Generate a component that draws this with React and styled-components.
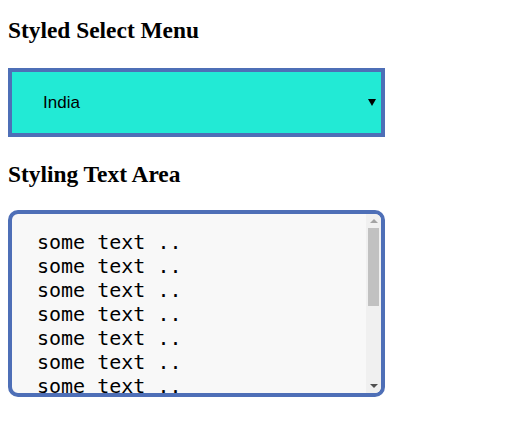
import React from "react";
import styled, { createGlobalStyle } from "styled-components";

const GlobalStyle = createGlobalStyle`
  body {
    margin: 8px;
    background: #ffffff;
    font-family: "Liberation Serif", "Times New Roman", serif;
    color: #000000;
  }
`

const Heading = styled.h3`
  font-family: "Liberation Serif", "Times New Roman", serif;
  font-size: 23.4px;
  font-weight: bold;
  margin: ${(p) => (p.$first ? "9px 0 24px" : "24px 0 22px")};
`

const SelectWrap = styled.div`
  position: relative;
  width: 377px;
`

const Select = styled.select`
  display: block;
  box-sizing: border-box;
  width: 100%;
  height: 69px;
  padding: 0 31px;
  border: 4px solid #4e6fb7;
  border-radius: 0;
  background-color: #22ead5;
  font-family: "Liberation Sans", Arial, sans-serif;
  font-size: 17px;
  color: #000000;
  outline: none;
  appearance: none;
  -webkit-appearance: none;
`

const Arrow = styled.span`
  position: absolute;
  right: 9px;
  top: 31px;
  width: 0;
  height: 0;
  border-left: 4px solid transparent;
  border-right: 4px solid transparent;
  border-top: 7px solid #000000;
  pointer-events: none;
`

const TextBox = styled.div`
  position: relative;
  width: 377px;
  height: 187px;
`

const TextArea = styled.textarea`
  display: block;
  box-sizing: border-box;
  width: 100%;
  height: 100%;
  padding: 16px 40px 16px 25px;
  border: 4px solid #4e6fb7;
  border-radius: 10px;
  background-color: #f8f8f8;
  font-family: "DejaVu Sans Mono", monospace;
  font-size: 20px;
  line-height: 24px;
  color: #000000;
  resize: none;
  outline: none;
  overflow: hidden;
`

const Scrollbar = styled.div`
  position: absolute;
  top: 4px;
  right: 4px;
  bottom: 4px;
  width: 15px;
  display: flex;
  flex-direction: column;
  background: #f0f0f0;
  border-radius: 0 6px 6px 0;
  overflow: hidden;
  pointer-events: none;
`

const ScrollButton = styled.div`
  height: 14px;
  flex: none;
  display: flex;
  align-items: center;
  justify-content: center;

  &::after {
    content: "";
    width: 0;
    height: 0;
    border-left: 4px solid transparent;
    border-right: 4px solid transparent;
    ${(p) =>
      p.$up
        ? "border-bottom: 4px solid #a3a3a3;"
        : "border-top: 4px solid #505050;"}
  }
`

const Track = styled.div`
  flex: 1;
`

const Thumb = styled.div`
  height: 78px;
  margin: 0 2px;
  background: #c1c1c1;
`

const lines = Array.from({ length: 13 }, () => "some text ..").join("\n");

const App = () => {
  return (
    <>
      <GlobalStyle />
      <Heading $first>Styled Select Menu</Heading>
      <SelectWrap>
        <Select defaultValue="india">
          <option value="india">India</option>
          <option value="usa">USA</option>
          <option value="uk">UK</option>
        </Select>
        <Arrow />
      </SelectWrap>
      <Heading>Styling Text Area</Heading>
      <TextBox>
        <TextArea defaultValue={lines} />
        <Scrollbar>
          <ScrollButton $up />
          <Track>
            <Thumb />
          </Track>
          <ScrollButton />
        </Scrollbar>
      </TextBox>
    </>
  )
}

export default App;
